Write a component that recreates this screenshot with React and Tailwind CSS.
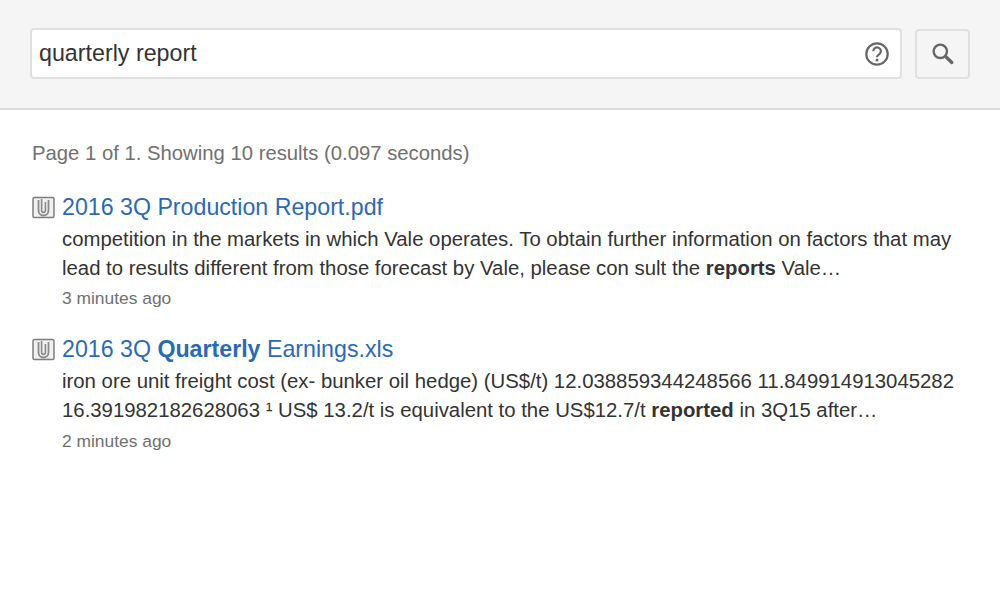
import React from "react";

const Clip = () => (
  <svg width="23" height="23" viewBox="0 0 23 23" fill="none" className="shrink-0">
    <rect x="1" y="1.5" width="21" height="20" rx="1.5" fill="#f1f1f1" stroke="#7d7d7d" strokeWidth="1.5" />
    <path d="M6.5 4v10.5a5 5 0 0 0 10 0V4" stroke="#8a8a8a" strokeWidth="1.8" />
    <path d="M9.6 3v11.5a1.9 1.9 0 0 0 3.8 0V6" stroke="#8a8a8a" strokeWidth="1.6" />
  </svg>
);

const Result = ({ title, lines, time, cls, timeCls }) => (
  <div className={cls}>
    <div className="flex items-center gap-[7px] h-[30px]">
      <Clip />
      <span className="text-[23.2px] leading-[30px] text-[#2a6ab3]">{title}</span>
    </div>
    <div className="pl-[30px] mt-[3px]">
      <div className="text-[20.35px] leading-[29px] text-[#333] whitespace-nowrap">{lines[0]}</div>
      <div className="text-[20.35px] leading-[29px] text-[#333] whitespace-nowrap">{lines[1]}</div>
      <div className={timeCls}>{time}</div>
    </div>
  </div>
);

export default function App() {
  return (
    <div className="w-[1000px] h-[598px] bg-white font-['Liberation_Sans',Arial,sans-serif] overflow-hidden">
      <div className="h-[110px] bg-[#f5f5f5] border-b-2 border-[#dcdcdc] flex items-start pl-[30px] pt-[28px]">
        <div className="w-[872px] h-[51px] bg-white border-2 border-[#e0e0e0] rounded-[4px] flex items-center justify-between pl-[7px] pr-[10px]">
          <span className="text-[23.25px] text-[#333]">quarterly report</span>
          <svg width="26" height="26" viewBox="0 0 26 26" fill="none">
            <circle cx="13" cy="13" r="10.7" stroke="#666" strokeWidth="2.2" />
            <path d="M9.3 10.2a3.8 3.8 0 1 1 5.8 3.2c-1.4.9-2.1 1.5-2.1 2.9" stroke="#666" strokeWidth="2.2" />
            <circle cx="13" cy="19" r="1.5" fill="#666" />
          </svg>
        </div>
        <div className="ml-[13px] mt-[1px] w-[55px] h-[50px] bg-[#f5f5f5] border-2 border-[#e0e0e0] rounded-[4px] flex items-center justify-center">
          <svg width="24" height="24" viewBox="0 0 24 24" fill="none">
            <circle cx="9.3" cy="9.3" r="6.7" stroke="#666" strokeWidth="2.4" />
            <path d="M14.6 14.6l6.2 5.8" stroke="#666" strokeWidth="3.4" strokeLinecap="round" />
          </svg>
        </div>
      </div>
      <div className="pl-[32px] pt-[30px]">
        <div className="text-[20.3px] leading-[26px] text-[#707070]">Page 1 of 1. Showing 10 results (0.097 seconds)</div>
        <Result
          cls="mt-[26px]"
          timeCls="text-[17.4px] leading-[24px] text-[#707070] mt-[3px]"
          title="2016 3Q Production Report.pdf"
          lines={[
            "competition in the markets in which Vale operates. To obtain further information on factors that may",
            <>lead to results different from those forecast by Vale, please con sult the <b>reports</b> Vale…</>,
          ]}
          time="3 minutes ago"
        />
        <Result
          cls="mt-[24px]"
          timeCls="text-[17.4px] leading-[24px] text-[#707070] mt-[4px]"
          title={<>2016 3Q <b>Quarterly</b> Earnings.xls</>}
          lines={[
            "iron ore unit freight cost (ex- bunker oil hedge) (US$/t) 12.038859344248566 11.849914913045282",
            <>16.391982182628063 ¹ US$ 13.2/t is equivalent to the US$12.7/t <b>reported</b> in 3Q15 after…</>,
          ]}
          time="2 minutes ago"
        />
      </div>
    </div>
  );
}
